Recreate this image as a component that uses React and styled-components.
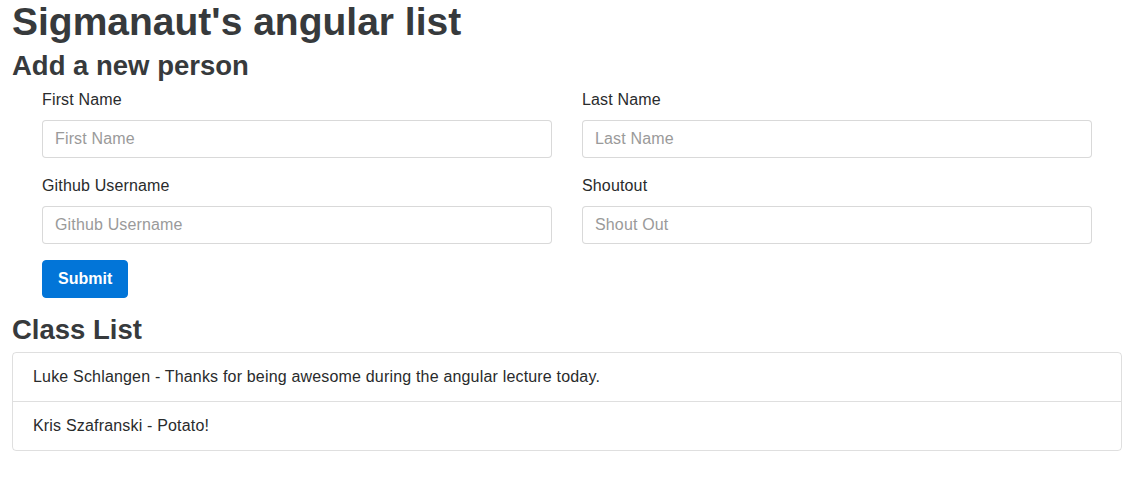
import React from "react";
import styled, { createGlobalStyle } from "styled-components";

const Global = createGlobalStyle`
  html, body { margin: 0; padding: 0; background: #fff; }
  body {
    font-family: "Liberation Sans", Arial, Helvetica, sans-serif;
    font-size: 16px;
    line-height: 1.5;
    color: #292b2c;
  }
  * { box-sizing: border-box; }
`;

const Page = styled.div`
  width: 1110px;
  margin-left: 12px;
`;

const Title = styled.h1`
  margin: 0 0 6px;
  font-size: 39px;
  line-height: 44px;
  font-weight: 700;
  color: #373a3c;
`;

const Heading = styled.h3`
  margin: 0 0 ${(p) => p.$mb || 7}px;
  font-size: 27.5px;
  line-height: 31px;
  font-weight: 700;
  color: #373a3c;
`;

const Form = styled.form`
  padding: 0 30px;
  margin-bottom: 16px;
`;

const Grid = styled.div`
  display: grid;
  grid-template-columns: 1fr 1fr;
  column-gap: 30px;
`;

const Group = styled.div`
  display: flex;
  flex-direction: column;
  margin-bottom: 16px;
`;

const Label = styled.label`
  display: block;
  margin-bottom: 8px;
  font-size: 16px;
  line-height: 24px;
  letter-spacing: 0.15px;
  color: #292b2c;
`;

const Input = styled.input`
  display: block;
  width: 100%;
  height: 38px;
  padding: 8px 12px;
  font-family: inherit;
  font-size: 16px;
  line-height: 20px;
  color: #464a4c;
  background: #fff;
  border: 1px solid rgba(0, 0, 0, 0.15);
  border-radius: 4px;
  outline: none;
  &::placeholder { color: #9a9a9a; opacity: 1; letter-spacing: 0.15px; }
`;

const Button = styled.button`
  display: inline-block;
  height: 38px;
  padding: 8px 15px;
  font-family: inherit;
  font-size: 16px;
  line-height: 20px;
  font-weight: 700;
  color: #fff;
  background: #0275d8;
  border: 1px solid #0275d8;
  border-radius: 4px;
  cursor: pointer;
`;

const List = styled.ul`
  margin: 0;
  padding: 0;
  list-style: none;
  border: 1px solid rgba(0, 0, 0, 0.125);
  border-radius: 4px;
`;

const Item = styled.li`
  padding: 12px 20px;
  font-size: 16px;
  line-height: 24px;
  letter-spacing: 0.18px;
  color: #292b2c;
  & + & { border-top: 1px solid rgba(0, 0, 0, 0.125); }
`;

const fields = [
  { label: "First Name", ph: "First Name" },
  { label: "Last Name", ph: "Last Name" },
  { label: "Github Username", ph: "Github Username" },
  { label: "Shoutout", ph: "Shout Out" },
];

const people = [
  "Luke Schlangen - Thanks for being awesome during the angular lecture today.",
  "Kris Szafranski - Potato!",
];

export default function App() {
  return (
    <Page>
      <Global />
      <Title>Sigmanaut's angular list</Title>
      <Heading>Add a new person</Heading>
      <Form onSubmit={(e) => e.preventDefault()}>
        <Grid>
          {fields.map((f) => (
            <Group key={f.label}>
              <Label>{f.label}</Label>
              <Input placeholder={f.ph} />
            </Group>
          ))}
        </Grid>
        <Button type="submit">Submit</Button>
      </Form>
      <Heading $mb={6.5}>Class List</Heading>
      <List>
        {people.map((p) => (
          <Item key={p}>{p}</Item>
        ))}
      </List>
    </Page>
  );
}
